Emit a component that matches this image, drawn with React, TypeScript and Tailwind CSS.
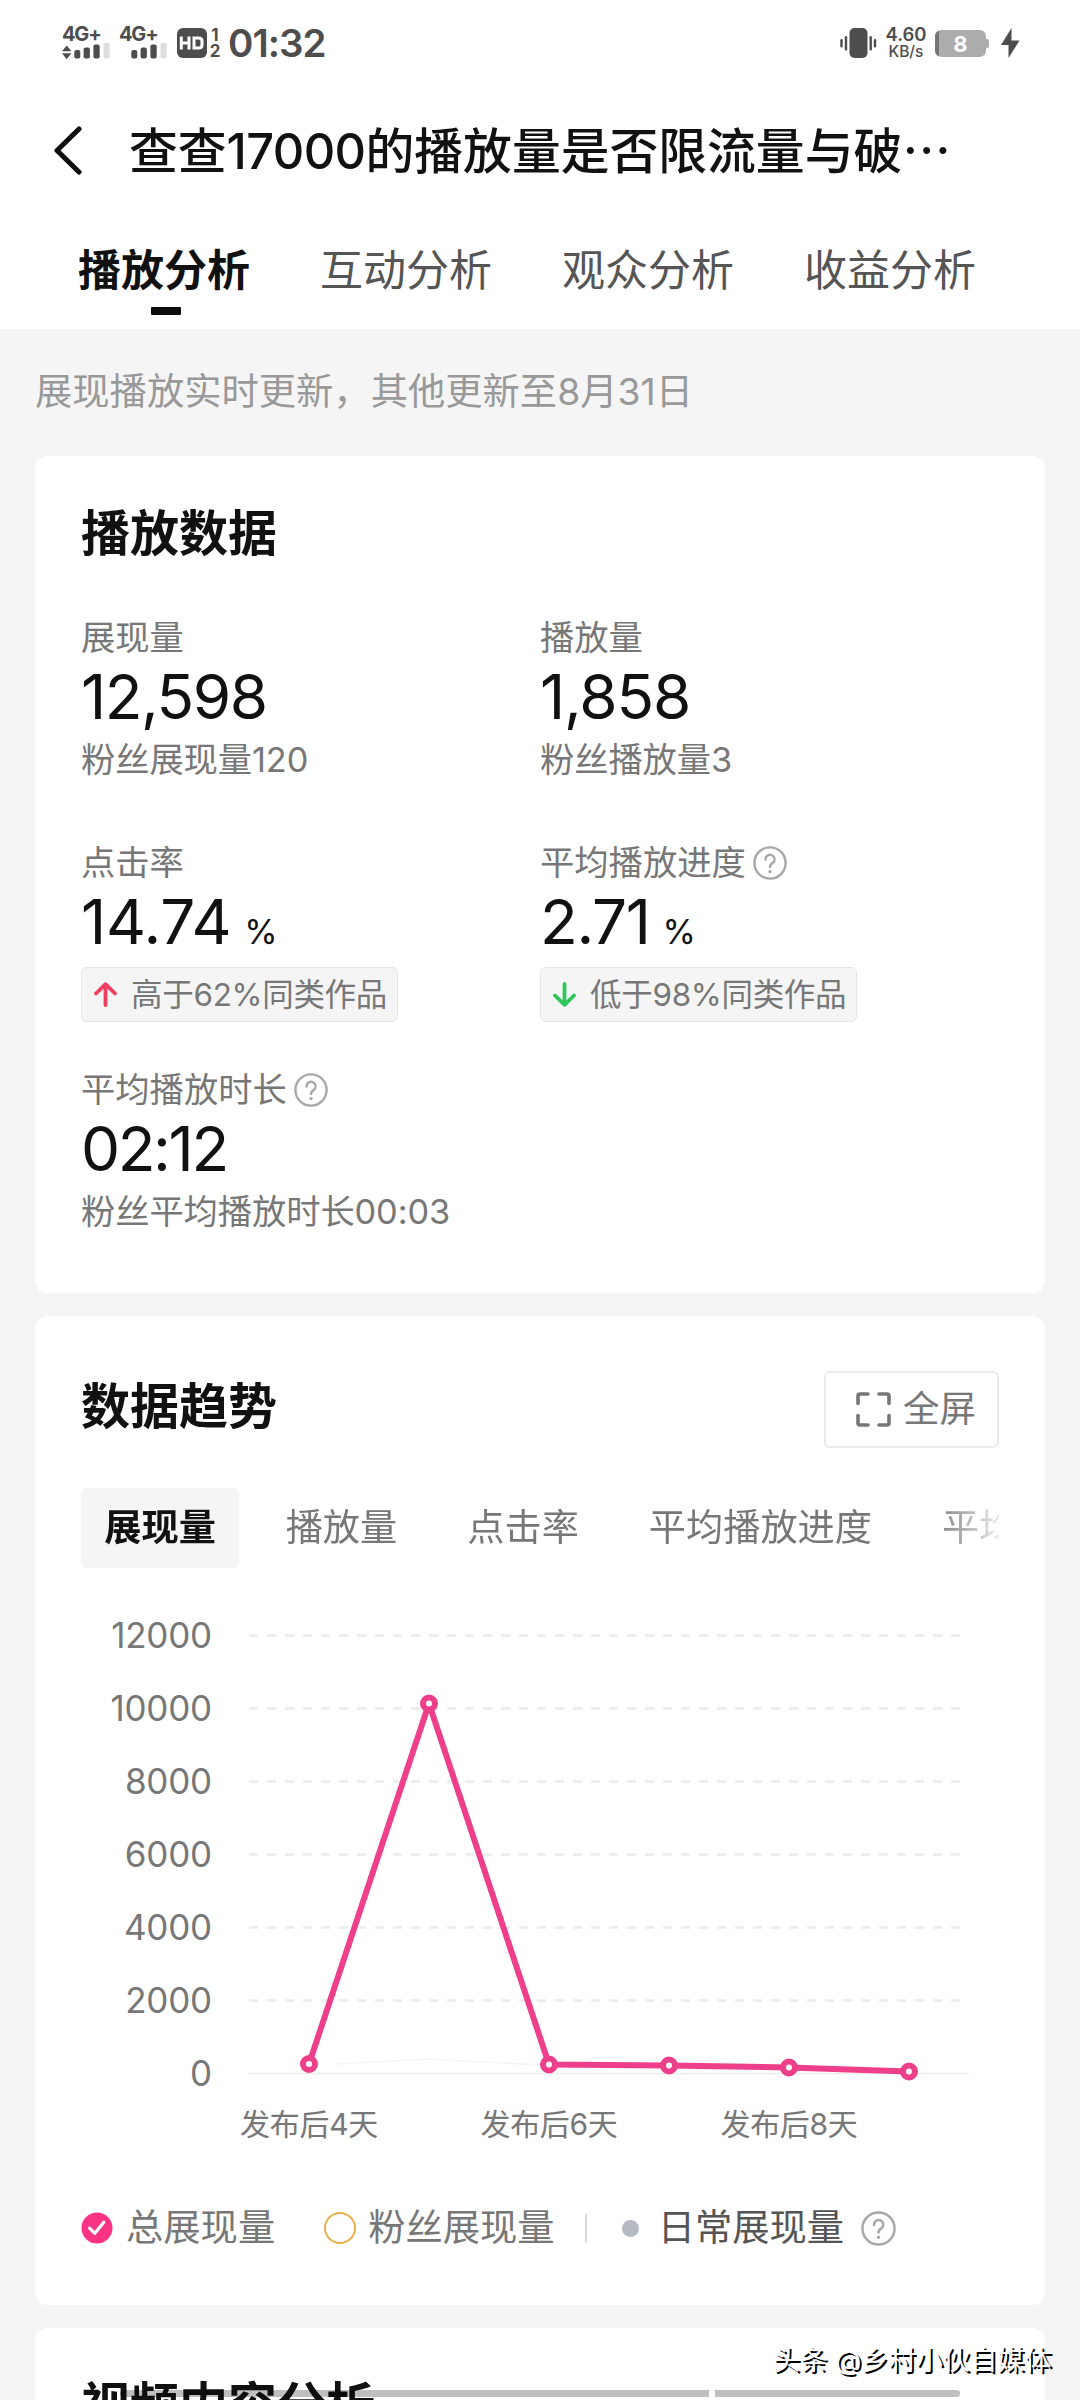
import React from 'react';

type Stat = {
  label: string;
  value: string;
  tracking: string;
  unit?: string;
  note?: string;
  help?: boolean;
  badge?: { text: string; up: boolean };
};

const pageTabs = ['播放分析', '互动分析', '观众分析', '收益分析'];

const stats: Stat[] = [
  { label: '展现量', value: '12,598', tracking: 'tracking-[-1.5px]', note: '粉丝展现量120' },
  { label: '播放量', value: '1,858', tracking: 'tracking-[-1.2px]', note: '粉丝播放量3' },
  { label: '点击率', value: '14.74', tracking: 'tracking-[-0.3px]', unit: '%', badge: { text: '高于62%同类作品', up: true } },
  { label: '平均播放进度', value: '2.71', tracking: 'tracking-[-1.4px]', unit: '%', help: true, badge: { text: '低于98%同类作品', up: false } },
  { label: '平均播放时长', value: '02:12', tracking: 'tracking-[-2.4px]', note: '粉丝平均播放时长00:03', help: true },
];

const trendTabs = ['展现量', '播放量', '点击率', '平均播放进度', '平均播放时长'];

const yTicks = [12000, 10000, 8000, 6000, 4000, 2000, 0];
const xTicks = ['发布后4天', '发布后6天', '发布后8天'];
const points = [
  [60, 429],
  [180, 68.5],
  [300, 429.5],
  [420, 430.5],
  [540, 432.5],
  [660, 436.5],
];

const Signal: React.FC<{ arrows?: boolean }> = ({ arrows }) => (
  <div className="flex h-[34px] w-[48px] flex-col">
    <span className="h-[17px] text-[20px] leading-[17px] font-bold tracking-[-1.2px]">4G+</span>
    <svg className="h-[17px] w-[48px]" viewBox="0 0 48 17" fill="#4d4d4d">
      {arrows && <path d="M0 8.3L4.7 2.5L9.4 8.3ZM0 10.3H9.4L4.7 16.3Z" />}
      <rect x="12.3" y="7" width="6" height="8.5" rx="2" />
      <rect x="21.6" y="4.5" width="6.3" height="11" rx="2" />
      <rect x="31.4" y="1.5" width="6.3" height="14" rx="2" />
      <rect x="41.5" y="0" width="6.2" height="15.5" rx="2" fill="#dedede" />
    </svg>
  </div>
);

const StatusBar = () => (
  <div className="flex h-[86px] items-center justify-between pr-[60px] pl-[62px] text-[#4d4d4d]">
    <div className="flex items-center">
      <Signal arrows />
      <div className="w-[9px]" />
      <Signal />
      <svg className="ml-[10px] h-[30px] w-[30px]" viewBox="0 0 30 30">
        <rect width="30" height="30" rx="6" fill="#4d4d4d" />
        <path d="M4.3 8.5V21.5M12 8.5V21.5M4.3 15H12M17 10H21.5Q25 10 25 13V17Q25 20 21.5 20H17Z" fill="none" stroke="#fff" strokeWidth="3" />
      </svg>
      <div className="ml-[2px] flex w-[12px] flex-col items-center text-[17px] leading-[16px] font-bold">
        <span>1</span>
        <span>2</span>
      </div>
      <span className="ml-[7px] text-[38.5px] leading-[44px] font-semibold tracking-[-1px]">01:32</span>
    </div>
    <div className="flex items-center">
      <svg className="h-[30px] w-[37px]" viewBox="0 0 37 30" fill="#4d4d4d">
        <rect x="9.5" width="18" height="30" rx="5" />
        <rect x="0.3" y="11" width="2.4" height="8.5" rx="1.2" />
        <rect x="4.8" y="8" width="2.4" height="14.5" rx="1.2" />
        <rect x="29.5" y="8" width="2.4" height="14.5" rx="1.2" />
        <rect x="33.8" y="11" width="2.4" height="8.5" rx="1.2" />
      </svg>
      <div className="ml-[8px] flex w-[42px] flex-col items-center font-semibold">
        <span className="text-[18.5px] leading-[17px]">4.60</span>
        <span className="text-[15.5px] leading-[17px] font-medium">KB/s</span>
      </div>
      <svg className="ml-[8px] h-[27px] w-[55px]" viewBox="0 0 55 27">
        <path d="M7 0H44Q51 0 51 7V9H52Q54 9 54 11V16Q54 18 52 18H51V20Q51 27 44 27H7Q0 27 0 20V7Q0 0 7 0Z" fill="#acacac" />
        <path d="M4 .7V26.3Q0 25 0 20V7Q0 2 4 .7Z" fill="#757575" />
        <text x="25.5" y="22" textAnchor="middle" fontSize="22" fontWeight="700" fill="#fff">8</text>
      </svg>
      <svg className="ml-[11px] h-[30px] w-[19px]" viewBox="0 0 19 30" fill="#4d4d4d">
        <path d="M10.5 0L0 17H7.5V30L18.5 12.5H10.5Z" />
      </svg>
    </div>
  </div>
);

const Help: React.FC<{ className: string }> = ({ className }) => (
  <svg className={className} viewBox="0 0 34 34" fill="none" stroke="#a8a8a8" strokeWidth="2.4" strokeLinecap="round">
    <circle cx="17" cy="17" r="15.6" />
    <path d="M12.6 13.6A4.5 4.5 0 1 1 19.8 16.9Q17 18.6 17 21" />
    <circle cx="17" cy="25.6" r="1.7" fill="#a8a8a8" stroke="none" />
  </svg>
);

const StatCell: React.FC<{ stat: Stat }> = ({ stat }) => (
  <div className="flex flex-col items-start">
    <div className="flex h-[44px] items-center gap-[7px] text-[34.3px] text-[#777]">
      {stat.label}
      {stat.help && <Help className="h-[34px] w-[34px]" />}
    </div>
    <div className="mt-[5px] flex h-[64px] items-baseline text-[62px] leading-[64px] text-[#111]">
      <span className={stat.tracking}>{stat.value}</span>
      {stat.unit && <span className="ml-[13px] text-[34px]">{stat.unit}</span>}
    </div>
    {stat.note && <div className="mt-[9px] text-[34.3px] leading-[44px] tracking-[-0.1px] text-[#777]">{stat.note}</div>}
    {stat.badge && (
      <div className="mt-[13px] flex h-[55px] w-[317px] items-center rounded-md border border-[#e6e6e6] bg-[#f5f5f5] pl-[12px] text-[31.5px] whitespace-nowrap text-[#777]">
        <svg
          className={stat.badge.up ? 'mr-[14px] h-[25px] w-[23px] shrink-0 text-[#ee3f5f]' : 'mr-[14px] h-[25px] w-[23px] shrink-0 rotate-180 text-[#2fc65b]'}
          viewBox="0 0 23 25"
          fill="none"
          stroke="currentColor"
          strokeWidth="3.8"
          strokeLinecap="round"
          strokeLinejoin="round"
        >
          <path d="M11.5 23V3M2 11.5L11.5 2.2L21 11.5" />
        </svg>
        <span className="tracking-[-0.3px]">{stat.badge.text}</span>
      </div>
    )}
  </div>
);

const TrendChart = () => (
  <div className="mt-[45px] flex">
    <div className="flex w-[131px] flex-col items-end text-[35px] tracking-[-0.2px] text-[#777]">
      {yTicks.map((tick) => (
        <span key={tick} className="h-[73px] leading-[44px]">{tick}</span>
      ))}
    </div>
    <div className="ml-[37px] w-[720px]">
      <svg className="block h-[468px] w-[720px]" viewBox="0 0 720 468" fill="none">
        {yTicks.slice(0, -1).map((tick, i) => (
          <path key={tick} d={`M0 ${i * 73 + 0.5}H711`} transform="translate(0 22)" stroke="#ebebeb" strokeWidth="2.4" strokeDasharray="9 9" />
        ))}
        <path d="M0 460.5H720" stroke="#ececec" strokeWidth="1.5" />
        <g transform="translate(0 22)">
          <path d="M88 429L180 424L291 430" stroke="#f5f5f5" strokeWidth="1.5" />
          <polyline points={points.map((p) => p.join(',')).join(' ')} stroke="#ee3f8a" strokeWidth="6" strokeLinejoin="round" />
          {points.map(([x, y]) => (
            <circle key={x} cx={x} cy={y} r="6" fill="#fff" stroke="#ee3f8a" strokeWidth="6" />
          ))}
        </g>
      </svg>
      <div className="mt-[21px] -ml-[15px] flex gap-[90px] text-[30px] leading-[44px] text-[#777]">
        {xTicks.map((tick) => (
          <span key={tick} className="w-[150px] shrink-0 text-center tracking-[-0.3px] whitespace-nowrap">{tick}</span>
        ))}
      </div>
    </div>
  </div>
);

const Legend = () => (
  <div className="mt-[60px] flex h-[44px] items-center text-[37.3px] whitespace-nowrap text-[#777]">
    <svg className="h-[32px] w-[32px]" viewBox="0 0 32 32" fill="none">
      <circle cx="16" cy="16" r="15.5" fill="#fb3385" />
      <path d="M8.5 16.2L13.8 21.3L22.8 10.2" stroke="#fff" strokeWidth="3.2" strokeLinecap="round" strokeLinejoin="round" />
    </svg>
    <span className="ml-[13px]">总展现量</span>
    <span className="ml-[49px] h-[32px] w-[32px] rounded-full border-2 border-[#ebb04a]" />
    <span className="ml-[12px]">粉丝展现量</span>
    <span className="ml-[30px] h-[29px] w-[2px] bg-[#dcdcdc]" />
    <span className="ml-[35px] h-[17px] w-[17px] rounded-full bg-[#b4bac0]" />
    <span className="ml-[19px] text-[#555]">日常展现量</span>
    <Help className="ml-[17px] h-[35px] w-[35px]" />
  </div>
);

const App: React.FC = () => {
  return (
    <div className="relative h-[2400px] w-[1080px] overflow-hidden bg-[#f5f5f5] font-['Inter','Noto_Sans_CJK_SC',sans-serif]">
      <header className="h-[329px] bg-white">
        <StatusBar />
        <div className="flex h-[128px] items-center pl-[53px]">
          <svg className="h-[50px] w-[30px]" viewBox="0 0 30 50" fill="none" stroke="#0d0d0d" strokeWidth="5" strokeLinecap="round" strokeLinejoin="round">
            <path d="M26 4L4 25.5L26 47" />
          </svg>
          <h1 className="ml-[46px] text-[48.8px] font-medium whitespace-nowrap text-[#111]">
            查查<span className="tracking-[-0.6px]">17000</span>的播放量是否限流量与破
            <span className="font-['Noto_Sans_CJK_SC']">…</span>
          </h1>
        </div>
        <nav className="flex gap-[70px] pl-[78px] text-[43px] leading-[60px] text-[#555]">
          {pageTabs.map((tab, i) => (
            <div key={tab} className="flex h-[115px] flex-col items-center pt-[26px]">
              <span className={i === 0 ? 'font-bold text-[#111]' : ''}>{tab}</span>
              {i === 0 && <span className="mt-[7px] ml-[3px] h-[8px] w-[30px] rounded-[1px] bg-[#0d0d0d]" />}
            </div>
          ))}
        </nav>
      </header>

      <p className="h-[127px] pt-[33px] pl-[35px] text-[37.3px] leading-[60px] text-[#999]">
        展现播放实时更新，其他更新至8月31日
      </p>

      <main className="ml-[35px] flex w-[1010px] flex-col gap-[23px]">
        <section className="h-[837px] rounded-xl bg-white px-[46px] pt-[48px]">
          <h2 className="text-[49px] leading-[60px] font-bold text-[#111]">播放数据</h2>
          <div className="mt-[52px] grid grid-cols-[459px_459px] grid-rows-[225px_227px_auto]">
            {stats.map((stat) => (
              <StatCell key={stat.label} stat={stat} />
            ))}
          </div>
        </section>

        <section className="h-[989px] rounded-xl bg-white px-[46px] pt-[55px]">
          <div className="flex items-center justify-between">
            <h2 className="pb-[5px] text-[49px] leading-[60px] font-bold text-[#111]">数据趋势</h2>
            <button className="flex h-[77px] w-[175px] items-center rounded-md border-2 border-[#ebebeb] pl-[30px] text-[36.5px] whitespace-nowrap text-[#777]">
              <svg className="mr-[12px] h-[35px] w-[35px] shrink-0" viewBox="0 0 35 35" fill="none" stroke="#777" strokeWidth="3.6" strokeLinecap="round">
                <path d="M2 11.5V4Q2 2 4 2H12M23 2H31Q33 2 33 4V11.5M33 23.5V31Q33 33 31 33H23M12 33H4Q2 33 2 31V23.5" />
              </svg>
              全屏
            </button>
          </div>
          <div className="mt-[40px] flex w-[918px] gap-[23px] overflow-hidden [mask-image:linear-gradient(to_right,#000_850px,transparent_930px)]">
            {trendTabs.map((tab, i) => (
              <span
                key={tab}
                className={
                  i === 0
                    ? 'h-[80px] shrink-0 rounded-md bg-[#f5f5f5] px-[23.3px] text-[37.2px] leading-[80px] font-bold text-[#111]'
                    : 'h-[80px] shrink-0 px-[23.5px] text-[37.2px] leading-[80px] text-[#777]'
                }
              >
                {tab}
              </span>
            ))}
          </div>
          <TrendChart />
          <Legend />
        </section>

        <section className="h-[300px] rounded-t-xl bg-white px-[46px] pt-[48px]">
          <h2 className="text-[49px] leading-[60px] font-bold text-[#111]">视频内容分析</h2>
        </section>
      </main>

      <div className="absolute top-[2390px] left-[120px] flex gap-[6px]">
        <div className="h-[7px] w-[589px] rounded-l-full bg-black/25" />
        <div className="h-[7px] w-[245px] rounded-r-full bg-black/25" />
      </div>
      <div className="absolute top-[2341px] left-[773px] text-[27.2px] leading-[40px] whitespace-nowrap text-white [text-shadow:2px_2px_0_#000]">
        头条 @乡村小伙自媒体
      </div>
    </div>
  );
};

export default App;
